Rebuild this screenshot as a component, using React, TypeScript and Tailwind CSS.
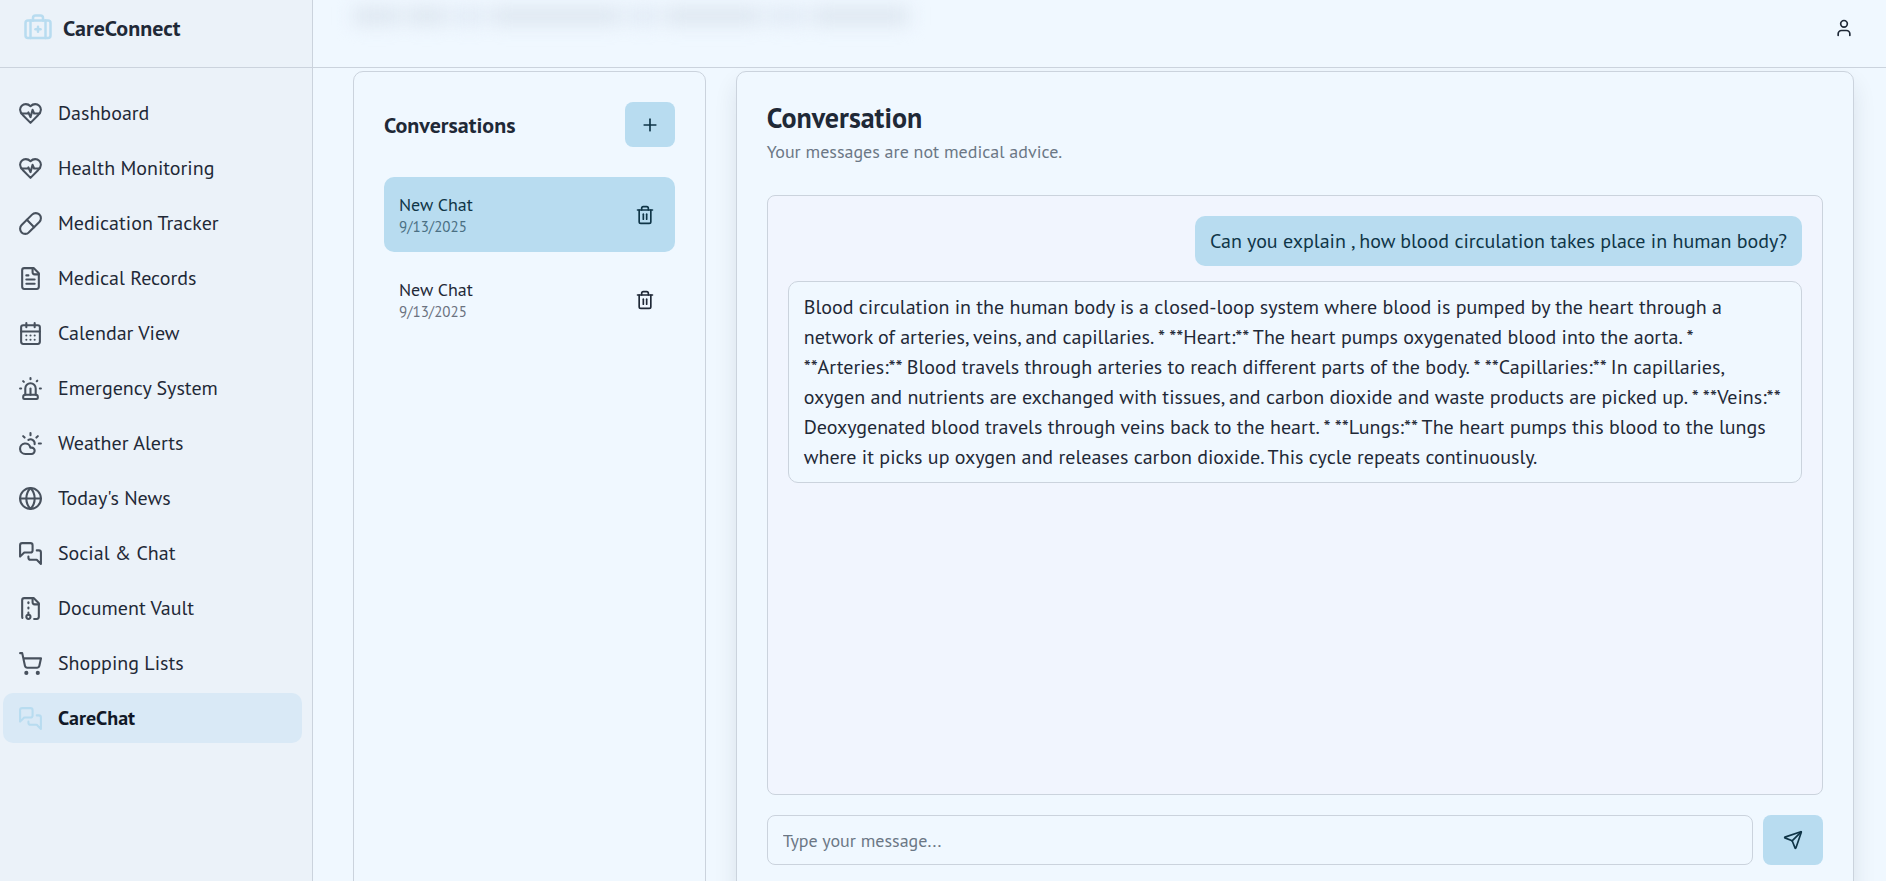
import { useState, type ComponentType, type FormEvent, type ReactNode } from "react";
import { BriefcaseMedical, CalendarDays, CloudSun, Globe, Pill, Plus, Send, ShoppingCart, Siren, User } from "lucide-react";

type IconProps = { size?: number; className?: string };

function Stroke({ size = 24, className, children }: IconProps & { children: ReactNode }) {
  return (
    <svg
      width={size}
      height={size}
      viewBox="0 0 24 24"
      fill="none"
      stroke="currentColor"
      strokeWidth="2"
      strokeLinecap="round"
      strokeLinejoin="round"
      aria-hidden="true"
      className={className}
    >
      {children}
    </svg>
  );
}

function HeartIcon(props: IconProps) {
  return (
    <Stroke {...props}>
      <path d="M19 14c1.49-1.46 3-3.21 3-5.5A5.5 5.5 0 0 0 16.5 3c-1.76 0-3 .5-4.5 2-1.5-1.5-2.74-2-4.5-2A5.5 5.5 0 0 0 2 8.5c0 2.3 1.5 4.05 3 5.5l7 7Z" />
      <path d="M3.22 12H9.5l.5-1 2 4.5 2-7 1.5 3.5h5.27" />
    </Stroke>
  );
}

function RecordIcon(props: IconProps) {
  return (
    <Stroke {...props}>
      <path d="M15 2H6a2 2 0 0 0-2 2v16a2 2 0 0 0 2 2h12a2 2 0 0 0 2-2V7Z" />
      <path d="M14 2v4a2 2 0 0 0 2 2h4" />
      <path d="M10 9H8" />
      <path d="M16 13H8" />
      <path d="M16 17H8" />
    </Stroke>
  );
}

function ArchiveIcon(props: IconProps) {
  return (
    <Stroke {...props}>
      <path d="M10 12v-1" />
      <path d="M10 18v-2" />
      <path d="M10 7V6" />
      <path d="M14 2v4a2 2 0 0 0 2 2h4" />
      <path d="M15.5 22H18a2 2 0 0 0 2-2V7l-5-5H6a2 2 0 0 0-2 2v16a2 2 0 0 0 .274 1.01" />
      <circle cx="10" cy="20" r="2" />
    </Stroke>
  );
}

function ChatIcon(props: IconProps) {
  return (
    <Stroke {...props}>
      <path d="M14 9a2 2 0 0 1-2 2H6l-4 4V4a2 2 0 0 1 2-2h8a2 2 0 0 1 2 2z" />
      <path d="M18 9h2a2 2 0 0 1 2 2v11l-4-4h-6a2 2 0 0 1-2-2v-1" />
    </Stroke>
  );
}

function TrashIcon(props: IconProps) {
  return (
    <Stroke {...props}>
      <path d="M3 6h18" />
      <path d="M19 6v14c0 1-1 2-2 2H7c-1 0-2-1-2-2V6" />
      <path d="M8 6V4c0-1 1-2 2-2h4c1 0 2 1 2 2v2" />
      <path d="M10 11v6" />
      <path d="M14 11v6" />
    </Stroke>
  );
}

const navItems: { label: string; icon: ComponentType<IconProps>; active?: boolean }[] = [
  { label: "Dashboard", icon: HeartIcon },
  { label: "Health Monitoring", icon: HeartIcon },
  { label: "Medication Tracker", icon: Pill },
  { label: "Medical Records", icon: RecordIcon },
  { label: "Calendar View", icon: CalendarDays },
  { label: "Emergency System", icon: Siren },
  { label: "Weather Alerts", icon: CloudSun },
  { label: "Today's News", icon: Globe },
  { label: "Social & Chat", icon: ChatIcon },
  { label: "Document Vault", icon: ArchiveIcon },
  { label: "Shopping Lists", icon: ShoppingCart },
  { label: "CareChat", icon: ChatIcon, active: true },
];

const conversations = [
  { id: 1, title: "New Chat", date: "9/13/2025" },
  { id: 2, title: "New Chat", date: "9/13/2025" },
];

const answer =
  "Blood circulation in the human body is a closed-loop system where blood is pumped by the heart through a network of arteries, veins, and capillaries. * **Heart:** The heart pumps oxygenated blood into the aorta. * **Arteries:** Blood travels through arteries to reach different parts of the body. * **Capillaries:** In capillaries, oxygen and nutrients are exchanged with tissues, and carbon dioxide and waste products are picked up. * **Veins:** Deoxygenated blood travels through veins back to the heart. * **Lungs:** The heart pumps this blood to the lungs where it picks up oxygen and releases carbon dioxide. This cycle repeats continuously.";

function Sidebar() {
  return (
    <aside className="flex w-[313px] shrink-0 flex-col border-r border-[#cbd3dd] bg-[#ebf2f9]">
      <div className="flex h-17 shrink-0 items-center gap-2.5 border-b border-[#cbd3dd] pb-3 pl-[23px]">
        <BriefcaseMedical size={30} className="text-[#b8dcf0]" />
        <span className="text-[22px] leading-[30px] font-bold">CareConnect</span>
      </div>
      <nav className="flex flex-col gap-[5px] pt-5 pr-2.5 pl-[3px]">
        {navItems.map(({ label, icon: Icon, active }) => (
          <a
            key={label}
            href="#"
            aria-current={active ? "page" : undefined}
            className={
              active
                ? "flex h-[50px] items-center gap-[15px] rounded-[10px] bg-[#d9e9f6] px-[15px] text-[20px] font-bold text-[#111827]"
                : "flex h-[50px] items-center gap-[15px] rounded-[10px] px-[15px] text-[20px]"
            }
          >
            <Icon size={25} className={active ? "text-[#b8dcf0]" : "opacity-80"} />
            {label}
          </a>
        ))}
      </nav>
    </aside>
  );
}

function Header() {
  return (
    <header className="flex h-17 shrink-0 items-center justify-between border-b border-[#cbd3dd] pr-8 pb-3 pl-10">
      <div aria-hidden="true" className="mb-6 flex h-[18px] w-[556px] gap-1.5 blur-[9px]">
        <span className="w-12 bg-[#dde6f0]" />
        <span className="w-10 bg-[#dde6f0]" />
        <span className="w-8 bg-[#e1eaf5]" />
        <span className="grow bg-[#dde6f0]" />
        <span className="w-8 bg-[#e1eaf5]" />
        <span className="w-24 bg-[#dde6f0]" />
        <span className="w-10 bg-[#e1eaf5]" />
        <span className="w-24 bg-[#dde6f0]" />
      </div>
      <button type="button" aria-label="Account" className="flex size-5 items-center justify-center">
        <User size={20} />
      </button>
    </header>
  );
}

function ConversationList() {
  const [selected, setSelected] = useState(1);
  return (
    <section className="rounded-[10px] border border-[#cbd3dd] bg-[#f0f8ff] p-[30px]">
      <div className="flex items-center justify-between">
        <h2 className="text-[22px] leading-[30px] font-bold">Conversations</h2>
        <button
          type="button"
          aria-label="New conversation"
          className="flex h-[45px] w-[50px] items-center justify-center rounded-lg bg-[#b8dcf0] text-[#0f3547]"
        >
          <Plus size={20} />
        </button>
      </div>
      <ul className="mt-[30px] flex flex-col gap-2.5">
        {conversations.map((c) => (
          <li
            key={c.id}
            className={
              c.id === selected
                ? "flex h-[75px] items-center justify-between rounded-[10px] bg-[#b8dcf0] px-[15px] text-[#0f3547]"
                : "flex h-[75px] items-center justify-between rounded-[10px] px-[15px]"
            }
          >
            <button type="button" onClick={() => setSelected(c.id)} className="grow text-left">
              <span className="block text-[18px] leading-[24px]">{c.title}</span>
              <span
                className={
                  c.id === selected
                    ? "block text-[15px] leading-5 text-[#4a6f83]"
                    : "block text-[15px] leading-5 text-[#6b7280]"
                }
              >
                {c.date}
              </span>
            </button>
            <button type="button" aria-label="Delete conversation" className="flex size-[30px] items-center justify-center">
              <TrashIcon size={20} />
            </button>
          </li>
        ))}
      </ul>
    </section>
  );
}

function ChatPanel() {
  const [draft, setDraft] = useState("");
  const submit = (e: FormEvent) => {
    e.preventDefault();
    setDraft("");
  };
  return (
    <section className="col-span-3 flex flex-col rounded-[10px] border border-[#cbd3dd] bg-[#f0f8ff] p-[30px] shadow-[0_12px_24px_-2px_rgba(31,41,55,0.12)]">
      <h1 className="text-[28px] leading-[32px] font-bold">Conversation</h1>
      <p className="mt-[5px] text-[18px] leading-[26px] text-[#6b7785]">Your messages are not medical advice.</p>
      <div className="mt-[30px] flex h-[600px] flex-col gap-[15px] rounded-lg border border-[#cbd3dd] bg-[#f1f5fe] p-5 text-[20px] leading-[30px]">
        <p className="self-end rounded-[10px] bg-[#b8dcf0] px-[15px] py-2.5 text-[#0f3547]">
          Can you explain , how blood circulation takes place in human body?
        </p>
        <p className="rounded-[10px] border border-[#cbd3dd] bg-[#f0f8ff] px-[15px] py-2.5">{answer}</p>
      </div>
      <form onSubmit={submit} className="mt-5 flex gap-2.5">
        <input
          type="text"
          aria-label="Message"
          placeholder="Type your message..."
          value={draft}
          onChange={(e) => setDraft(e.target.value)}
          className="h-[50px] min-w-0 grow rounded-lg border border-[#cbd3dd] bg-[#f0f8ff] px-[15px] text-[18px] outline-none placeholder:text-[#6b7785]"
        />
        <button
          type="submit"
          aria-label="Send message"
          className="flex h-[50px] w-[60px] items-center justify-center rounded-lg bg-[#b8dcf0] text-[#0f3547]"
        >
          <Send size={20} />
        </button>
      </form>
    </section>
  );
}

export default function App() {
  return (
    <div className="flex h-screen overflow-hidden bg-[#f0f8ff] font-['PT_Sans','Lato',sans-serif] text-[#1f2937]">
      <Sidebar />
      <div className="flex min-w-0 grow flex-col">
        <Header />
        <main className="min-h-0 grow overflow-hidden pt-[3px] pr-8 pl-10">
          <div className="grid grid-cols-4 gap-[30px]">
            <ConversationList />
            <ChatPanel />
          </div>
        </main>
      </div>
    </div>
  );
}
